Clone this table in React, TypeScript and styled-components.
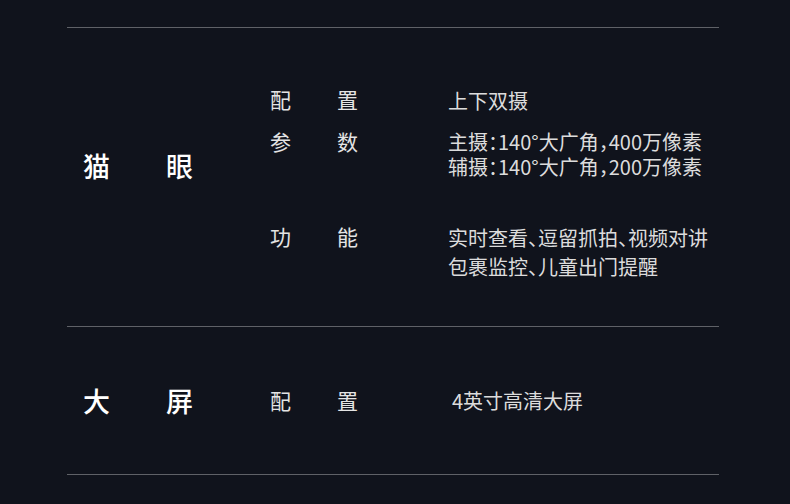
import React from 'react';
import styled, { createGlobalStyle } from 'styled-components';

const GlobalStyle = createGlobalStyle`
  html, body {
    margin: 0;
    padding: 0;
    background: #10131c;
  }
  body {
    font-family: "Noto Sans CJK SC", "Noto Sans", sans-serif;
  }
`;

const Page = styled.div`
  width: 790px;
  height: 504px;
  background: #10131c;
  padding: 27px 71px 0 67px;
  box-sizing: border-box;
  overflow: hidden;
`;

const Table = styled.div`
  border-top: 1px solid #5f6167;
`;

const Section = styled.div<{ $top: number; $bottom: number; $center?: boolean }>`
  display: flex;
  align-items: ${(p) => (p.$center ? 'center' : 'flex-start')};
  padding: ${(p) => p.$top}px 0 ${(p) => p.$bottom}px;
  border-bottom: 1px solid #5f6167;
`;

const Title = styled.div<{ $offset?: number }>`
  display: flex;
  flex-shrink: 0;
  gap: 56px;
  width: 187px;
  padding-left: 16px;
  margin-top: ${(p) => p.$offset ?? 0}px;
  color: #ffffff;
  font-size: 27px;
  font-weight: 500;
  line-height: 28px;
`;

const Specs = styled.div`
  display: flex;
  flex-direction: column;
`;

const Row = styled.div<{ $gap?: number }>`
  display: flex;
  align-items: flex-start;
  margin-top: ${(p) => p.$gap ?? 0}px;
`;

const Label = styled.div<{ $lh: number }>`
  display: flex;
  flex-shrink: 0;
  gap: 46px;
  width: 178px;
  color: #e4e4e4;
  font-size: 21px;
  line-height: ${(p) => p.$lh}px;
`;

const Value = styled.div<{ $lh: number; $indent?: number }>`
  color: #dcdcdc;
  font-family: "Noto Sans CJK SC", sans-serif;
  font-feature-settings: "halt";
  font-size: 20px;
  line-height: ${(p) => p.$lh}px;
  padding-left: ${(p) => p.$indent ?? 0}px;
  padding-top: 1px;
  white-space: nowrap;
`;

const TwoChars = ({ text }: { text: string }) => (
  <>
    <span>{text[0]}</span>
    <span>{text[1]}</span>
  </>
);

export default function App() {
  return (
    <Page>
      <GlobalStyle />
      <Table>
        <Section $top={60} $bottom={45}>
          <Title $offset={64}>
            <TwoChars text="猫眼" />
          </Title>
          <Specs>
            <Row>
              <Label $lh={22}>
                <TwoChars text="配置" />
              </Label>
              <Value $lh={24}>上下双摄</Value>
            </Row>
            <Row $gap={16}>
              <Label $lh={24}>
                <TwoChars text="参数" />
              </Label>
              <Value $lh={24.5}>
                主摄：140°大广角，400万像素
                <br />
                辅摄：140°大广角，200万像素
              </Value>
            </Row>
            <Row $gap={43}>
              <Label $lh={28}>
                <TwoChars text="功能" />
              </Label>
              <Value $lh={29}>
                实时查看、逗留抓拍、视频对讲
                <br />
                包裹监控、儿童出门提醒
              </Value>
            </Row>
          </Specs>
        </Section>
        <Section $top={0} $bottom={0} $center style={{ height: 147 }}>
          <Title>
            <TwoChars text="大屏" />
          </Title>
          <Row>
            <Label $lh={24}>
              <TwoChars text="配置" />
            </Label>
            <Value $lh={24} $indent={4}>
              4英寸高清大屏
            </Value>
          </Row>
        </Section>
      </Table>
    </Page>
  );
}
